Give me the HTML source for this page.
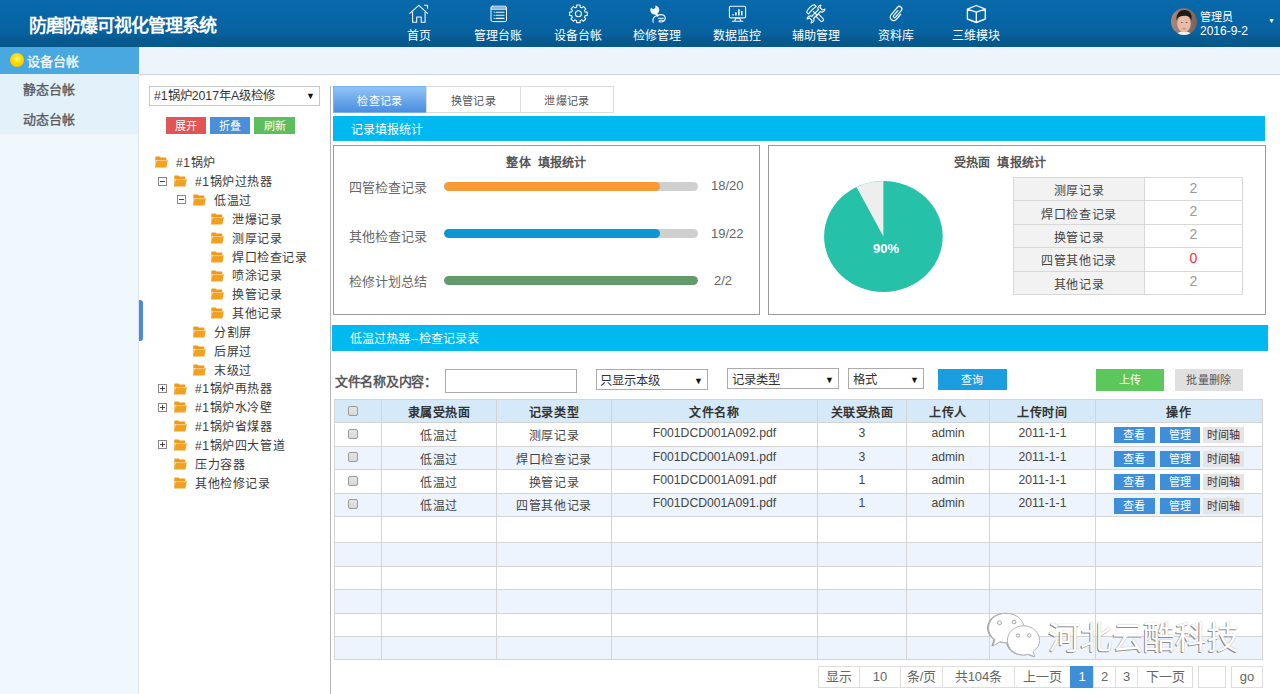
<!DOCTYPE html>
<html lang="zh-CN">
<head>
<meta charset="utf-8">
<style>
*{box-sizing:border-box;margin:0;padding:0}
html,body{width:1280px;height:694px;overflow:hidden;background:#fff;font-family:"Liberation Sans",sans-serif;font-size:12px;color:#333}
.a{position:absolute;white-space:nowrap}
#hdr{position:absolute;left:0;top:0;width:1280px;height:47px;background:linear-gradient(#0869ab 0%,#0765a5 45%,#07619e 72%,#065a90 82%,#06578a 100%)}
#title{position:absolute;left:29px;top:11px;font-size:18px;font-weight:bold;color:#fff;letter-spacing:-1.05px;white-space:nowrap}
.nav{position:absolute;top:0;width:80px;height:47px;text-align:center;color:#fff}
.nav svg{position:absolute;left:30px;top:5px}
.nav span{position:absolute;left:0;right:0;top:28px;font-size:12px;line-height:16px;white-space:nowrap}
#user1{position:absolute;left:1200px;top:11px;color:#fff;font-size:11px;line-height:13px}
#user2{position:absolute;left:1200px;top:24px;color:#fff;font-size:12px;line-height:14px}
#avatar{position:absolute;left:1171px;top:8px;width:26px;height:26px;border-radius:50%;background:radial-gradient(ellipse at 50% 55%,#f2d0bc 0,#e0b09a 32%,#9a7868 52%,#6a5048 100%);overflow:hidden}
#side{position:absolute;left:0;top:47px;width:139px;height:647px;background:#f0f7fd;border-right:1px solid #dde6ee}
#sidehead{position:absolute;left:0;top:47px;width:139px;height:27px;background:#4aa8e0;color:#fff;font-size:13px;font-weight:bold}
.sideitem{position:absolute;left:0;width:138px;height:31px;background:#e3f1fa;border-bottom:1px solid #eef6fb;color:#5a5a5a;font-size:13px;font-weight:normal;-webkit-text-stroke:0.35px #5a5a5a;padding-left:22.5px;line-height:32px}
#topstrip{position:absolute;left:139px;top:47px;width:1141px;height:28px;background:#eef4fb;border-bottom:1px solid #d0d4d8}
.sel{position:absolute;background:#fff;border:1px solid #c8c8c8;font-size:12.3px;color:#333;padding-left:4px;white-space:nowrap;overflow:hidden}
.sel i{position:absolute;right:4px;top:0;font-style:normal;font-size:9px;color:#111}
.btn{position:absolute;color:#fff;font-size:12px;text-align:center;white-space:nowrap}
.tr{position:absolute;font-size:12px;letter-spacing:0.6px;color:#3a3a3a;white-space:nowrap;line-height:16px}
.fold{position:absolute;width:13px;height:12px}
.box{position:absolute;width:9px;height:9px;border:1px solid #888;background:#fff}
.box:before{content:"";position:absolute;left:1px;top:3px;width:5px;height:1px;background:#444}
.box.p:after{content:"";position:absolute;left:3px;top:1px;width:1px;height:5px;background:#444}
.tab{position:absolute;top:86px;height:27px;border:1px solid #dcdcdc;background:#fff;color:#555;font-size:11px;letter-spacing:0.3px;text-align:center;line-height:28px}
.bar{position:absolute;left:333px;width:932px;height:25px;background:#00b9f1;color:#fff;font-size:12px;letter-spacing:0.1px;padding-left:18px;line-height:29px}
.pbox{position:absolute;top:145px;height:170px;border:1px solid #999}
.lbl{position:absolute;font-size:13px;color:#666;white-space:nowrap}
.prog{position:absolute;left:444px;width:254px;height:9px;border-radius:5px;background:#cfcfcf;overflow:hidden}
.prog b{position:absolute;left:0;top:0;height:9px;border-radius:5px}
.val{position:absolute;font-size:13px;color:#666}
table{border-collapse:collapse}
#mini{position:absolute;left:1013px;top:177px;width:230px}
#mini td{border:1px solid #d8d8d8;height:23.4px;font-size:13px;text-align:center;padding:0}
#mini td.l{background:#f2f2f2;color:#444;width:131px;font-size:12px;letter-spacing:0.6px;padding-top:1px}
#mini td.r{color:#9a9a9a;font-size:14px;padding-bottom:3px}
#grid{position:absolute;left:334px;top:399px;width:928px;table-layout:fixed}
#grid td,#grid th{border:1px solid #d4d4d4;text-align:center;padding:0;font-size:12px;letter-spacing:0.6px;color:#444;overflow:hidden;white-space:nowrap}
#grid th{background:#d5e9f8;font-weight:bold;color:#333;font-size:12px;letter-spacing:0.6px;padding-top:1px}
#grid tr.o td{background:#edf4fd}
#grid td.lt{padding-bottom:3px;font-size:12.2px;letter-spacing:0;color:#444}
.cb{position:absolute;left:13px;top:5.5px;width:10px;height:10px;border:1px solid #9a9a9a;border-radius:2px;background:linear-gradient(#e4e4e4,#d8d8d8)}
#grid td:first-child,#grid th:first-child{position:relative}
.ob{position:absolute;height:16.6px;line-height:17px;width:40.5px;font-size:11px;letter-spacing:0.3px;color:#fff;background:#3e8fd8;text-align:center}
.ob.g{background:#e4e4e4;color:#333}
.pg{position:absolute;top:666px;height:22px;border:1px solid #ddd;background:#fff;color:#666;font-size:13px;text-align:center;line-height:20px}
</style>
</head>
<body>
<div id="hdr"></div>
<div id="title">防磨防爆可视化管理系统</div>

<div class="nav" style="left:379px"><span>首页</span></div>
<div class="nav" style="left:458px"><span>管理台账</span></div>
<div class="nav" style="left:538px"><span>设备台帐</span></div>
<div class="nav" style="left:617px"><span>检修管理</span></div>
<div class="nav" style="left:697px"><span>数据监控</span></div>
<div class="nav" style="left:776px"><span>辅助管理</span></div>
<div class="nav" style="left:856px"><span>资料库</span></div>
<div class="nav" style="left:936px"><span>三维模块</span></div>

<svg class="a" style="left:0;top:0" width="1280" height="47" viewBox="0 0 1280 47" fill="none" stroke="#f4f8fc" stroke-width="1.1" stroke-linejoin="round" stroke-linecap="round">
<path d="M409.8 13.3 L418.8 5.3 L427.6 13.3"/>
<path d="M412.6 12.2 V22.3 H416.7 V17 H421.2 V22.3 H425.1 V12.2"/>
<path d="M424.4 5.2 H427.5 V8.2"/>
<rect x="491" y="6.2" width="15.5" height="15.4" rx="1.6" stroke-width="1"/>
<path d="M491.5 8 H506" stroke-width="2.2" stroke-opacity="0.55"/><path d="M491.5 9.4 H506" stroke-width="0.8"/>
<path d="M496 12.2 H504 M496 15.3 H504 M496 18.4 H504"/>
<path d="M494 12.2 H494.6 M494 15.3 H494.6 M494 18.4 H494.6" stroke-width="0.8"/>
<path d="M575.76 7.43 L576.61 7.14 L576.68 4.97 L580.12 4.97 L580.19 7.14 L581.04 7.43 L581.85 7.82 L583.43 6.34 L585.86 8.77 L584.38 10.35 L584.77 11.16 L585.06 12.01 L587.23 12.08 L587.23 15.52 L585.06 15.59 L584.77 16.44 L584.38 17.25 L585.86 18.83 L583.43 21.26 L581.85 19.78 L581.04 20.17 L580.19 20.46 L580.12 22.63 L576.68 22.63 L576.61 20.46 L575.76 20.17 L574.95 19.78 L573.37 21.26 L570.94 18.83 L572.42 17.25 L572.03 16.44 L571.74 15.59 L569.57 15.52 L569.57 12.08 L571.74 12.01 L572.03 11.16 L572.42 10.35 L570.94 8.77 L573.37 6.34 L574.95 7.82 Z"/>
<circle cx="578.4" cy="13.8" r="3"/>
<g transform="rotate(-25 654.8 10)"><circle cx="654.8" cy="10" r="4.5" fill="#f4f8fc" stroke="none"/><circle cx="654.8" cy="6.3" r="2.3" fill="#0868aa" stroke="none"/><rect x="652.5" y="3" width="4.6" height="3.3" fill="#0868aa" stroke="none"/></g><path d="M655.5 13 L657.6 15.6" stroke-width="2.2"/>
<path d="M653.2 22.3 C652.3 19.5 654 16.8 657 15.6 C659.5 14.6 662.5 14.3 664 15.5 C665.8 17 665.6 19.8 663.8 21 C662.5 22 660.5 22.2 659 21.5"/>
<path d="M658.5 18.2 H663.4 M659.3 20.2 H663"/>
<rect x="729.4" y="6.3" width="16.2" height="11.6" rx="1.2"/>
<path d="M732.3 21.2 H742.8 M734.5 21 L736 18.2 H739.5 L741 21" />
<path d="M733.1 15.6 V14.2 M735.9 15.6 V12.3 M738.9 15.6 V9.3 M741.8 15.6 V11" stroke-width="1.6" stroke-linecap="butt"/>
<g transform="rotate(-45 816 14)">
<rect x="814.3" y="15.5" width="3.4" height="8.2" rx="1.2"/>
<path d="M816 10.5 V15.5"/>
<path d="M810.5 6.2 C812.5 4.6 819.5 4.6 821.5 6.2 L821.5 8.8 C819.5 8.2 812.5 8.2 810.5 8.8 Z" transform="rotate(0)"/>
</g>
<g transform="rotate(45 816 14)">
<path d="M814.6 9.4 V18.6 M817.4 9.4 V18.6"/>
<path d="M814.6 9.4 C812.2 8.6 811.8 5.6 813.2 4.2 L814.2 6.6 H817.8 L818.8 4.2 C820.2 5.6 819.8 8.6 817.4 9.4"/>
<path d="M814.6 18.6 C812.2 19.4 811.8 22.4 813.2 23.8 L814.2 21.4 H817.8 L818.8 23.8 C820.2 22.4 819.8 19.4 817.4 18.6"/>
</g>
<path transform="rotate(40 896.5 14)" d="M895.3 10.5 V17 A1.3 1.3 0 0 0 897.9 17 V8.3 A2.5 2.5 0 0 0 892.9 8.3 V18.2 A3.5 3.5 0 0 0 899.9 18.2 V11.5" stroke-width="1.25"/>
<path d="M976.3 5.5 L985.3 9.2 V19 L976.3 22.5 L967.4 19 V9.2 Z M967.4 9.2 L976.3 12.2 L985.3 9.2 M976.3 12.2 V22.5" stroke-width="1.35"/>
</svg>
<svg class="a" style="left:1170px;top:8px" width="28" height="28" viewBox="0 0 28 28"><defs><clipPath id="ac"><ellipse cx="14" cy="13.6" rx="13" ry="13.4"/></clipPath><linearGradient id="abg" x1="0" x2="1"><stop offset="0" stop-color="#b08878"/><stop offset="1" stop-color="#7a6058"/></linearGradient></defs>
<g clip-path="url(#ac)"><rect width="28" height="28" fill="url(#abg)"/>
<path d="M6 30 C6 25 9 23.5 14 23.5 C19 23.5 22 25 22 30 Z" fill="#f2f2f2"/>
<ellipse cx="14" cy="15.5" rx="6.8" ry="8.8" fill="#e6bca6"/>
<path d="M6.5 12.5 C6 5 10 2 14.5 2 C19.5 2 22.5 5.5 21.5 12.5 C20.5 9 18.5 7.5 14 7.8 C9.5 8 7.5 9.5 6.5 12.5 Z" fill="#1e1a1a"/>
<path d="M11 14.5 H12.5 M15.8 14.5 H17.3" stroke="#5a4038" stroke-width="0.8"/>
<path d="M12.5 20.5 Q14 21.3 15.5 20.5" stroke="#b87060" stroke-width="0.9" fill="none"/>
</g></svg>
<div id="user1">管理员</div>
<div id="user2">2016-9-2</div>
<div class="a" style="left:1268px;top:17px;color:#fff;font-size:7px">▼</div>

<div id="side"></div>
<div id="sidehead"><div class="a" style="left:10px;top:6px;width:14px;height:14px;border-radius:50%;background:radial-gradient(circle at 50% 40%,#fff8a0 0,#ffe000 35%,#f8b800 100%)"></div><div class="a" style="left:27px;top:6px;line-height:17px;font-size:13px;font-weight:normal;-webkit-text-stroke:0.35px #f4f8fc;color:#f4f8fc">设备台帐</div></div>
<div class="sideitem" style="top:74px">静态台帐</div>
<div class="sideitem" style="top:104px">动态台帐</div>
<div id="topstrip"></div>

<!-- tree panel -->
<div class="a" style="left:139px;top:300px;width:4px;height:41px;background:#4a8ad8;border-radius:0 3px 3px 0"></div>
<div class="a" style="left:330px;top:86px;width:1.3px;height:608px;background:#b4b4b4"></div>
<div class="sel" style="left:149px;top:86px;width:171px;height:20px;line-height:18px">#1锅炉2017年A级检修<i>▼</i></div>
<div class="btn" style="left:166px;top:117px;width:40px;height:17px;line-height:19px;font-size:11px;background:#e25555">展开</div>
<div class="btn" style="left:210px;top:117px;width:40px;height:17px;line-height:19px;font-size:11px;background:#4a90d8">折叠</div>
<div class="btn" style="left:254px;top:117px;width:41px;height:17px;line-height:19px;font-size:11px;background:#5cbf5c">刷新</div>
<div id="tree"><svg class="fold" style="left:155px;top:156px" width="13" height="12" viewBox="0 0 13 12"><path d="M0.3 1.2 Q0.3 0.4 1 0.4 H4.6 L5.6 1.6 H10.6 Q11.3 1.6 11.3 2.3 V4 H0.3 Z" fill="#ee9a1c"/><path d="M0.2 11.4 L1.6 4.2 H12.8 L11.4 11.4 Z" fill="#f2a01e"/><path d="M0.3 4 V11.3" stroke="#e8961a" stroke-width="0.6"/><path d="M1.8 4.7 H12.3" stroke="#fbd08a" stroke-width="0.7"/></svg><div class="tr" style="left:176px;top:155px">#1锅炉</div><svg class="fold" style="left:174px;top:175px" width="13" height="12" viewBox="0 0 13 12"><path d="M0.3 1.2 Q0.3 0.4 1 0.4 H4.6 L5.6 1.6 H10.6 Q11.3 1.6 11.3 2.3 V4 H0.3 Z" fill="#ee9a1c"/><path d="M0.2 11.4 L1.6 4.2 H12.8 L11.4 11.4 Z" fill="#f2a01e"/><path d="M0.3 4 V11.3" stroke="#e8961a" stroke-width="0.6"/><path d="M1.8 4.7 H12.3" stroke="#fbd08a" stroke-width="0.7"/></svg><div class="box" style="left:158px;top:177px"></div><div class="tr" style="left:195px;top:174px">#1锅炉过热器</div><svg class="fold" style="left:193px;top:194px" width="13" height="12" viewBox="0 0 13 12"><path d="M0.3 1.2 Q0.3 0.4 1 0.4 H4.6 L5.6 1.6 H10.6 Q11.3 1.6 11.3 2.3 V4 H0.3 Z" fill="#ee9a1c"/><path d="M0.2 11.4 L1.6 4.2 H12.8 L11.4 11.4 Z" fill="#f2a01e"/><path d="M0.3 4 V11.3" stroke="#e8961a" stroke-width="0.6"/><path d="M1.8 4.7 H12.3" stroke="#fbd08a" stroke-width="0.7"/></svg><div class="box" style="left:177px;top:195px"></div><div class="tr" style="left:214px;top:193px">低温过</div><svg class="fold" style="left:211px;top:213px" width="13" height="12" viewBox="0 0 13 12"><path d="M0.3 1.2 Q0.3 0.4 1 0.4 H4.6 L5.6 1.6 H10.6 Q11.3 1.6 11.3 2.3 V4 H0.3 Z" fill="#ee9a1c"/><path d="M0.2 11.4 L1.6 4.2 H12.8 L11.4 11.4 Z" fill="#f2a01e"/><path d="M0.3 4 V11.3" stroke="#e8961a" stroke-width="0.6"/><path d="M1.8 4.7 H12.3" stroke="#fbd08a" stroke-width="0.7"/></svg><div class="tr" style="left:232px;top:212px">泄爆记录</div><svg class="fold" style="left:211px;top:232px" width="13" height="12" viewBox="0 0 13 12"><path d="M0.3 1.2 Q0.3 0.4 1 0.4 H4.6 L5.6 1.6 H10.6 Q11.3 1.6 11.3 2.3 V4 H0.3 Z" fill="#ee9a1c"/><path d="M0.2 11.4 L1.6 4.2 H12.8 L11.4 11.4 Z" fill="#f2a01e"/><path d="M0.3 4 V11.3" stroke="#e8961a" stroke-width="0.6"/><path d="M1.8 4.7 H12.3" stroke="#fbd08a" stroke-width="0.7"/></svg><div class="tr" style="left:232px;top:231px">测厚记录</div><svg class="fold" style="left:211px;top:251px" width="13" height="12" viewBox="0 0 13 12"><path d="M0.3 1.2 Q0.3 0.4 1 0.4 H4.6 L5.6 1.6 H10.6 Q11.3 1.6 11.3 2.3 V4 H0.3 Z" fill="#ee9a1c"/><path d="M0.2 11.4 L1.6 4.2 H12.8 L11.4 11.4 Z" fill="#f2a01e"/><path d="M0.3 4 V11.3" stroke="#e8961a" stroke-width="0.6"/><path d="M1.8 4.7 H12.3" stroke="#fbd08a" stroke-width="0.7"/></svg><div class="tr" style="left:232px;top:250px">焊口检查记录</div><svg class="fold" style="left:211px;top:270px" width="13" height="12" viewBox="0 0 13 12"><path d="M0.3 1.2 Q0.3 0.4 1 0.4 H4.6 L5.6 1.6 H10.6 Q11.3 1.6 11.3 2.3 V4 H0.3 Z" fill="#ee9a1c"/><path d="M0.2 11.4 L1.6 4.2 H12.8 L11.4 11.4 Z" fill="#f2a01e"/><path d="M0.3 4 V11.3" stroke="#e8961a" stroke-width="0.6"/><path d="M1.8 4.7 H12.3" stroke="#fbd08a" stroke-width="0.7"/></svg><div class="tr" style="left:232px;top:268px">喷涂记录</div><svg class="fold" style="left:211px;top:288px" width="13" height="12" viewBox="0 0 13 12"><path d="M0.3 1.2 Q0.3 0.4 1 0.4 H4.6 L5.6 1.6 H10.6 Q11.3 1.6 11.3 2.3 V4 H0.3 Z" fill="#ee9a1c"/><path d="M0.2 11.4 L1.6 4.2 H12.8 L11.4 11.4 Z" fill="#f2a01e"/><path d="M0.3 4 V11.3" stroke="#e8961a" stroke-width="0.6"/><path d="M1.8 4.7 H12.3" stroke="#fbd08a" stroke-width="0.7"/></svg><div class="tr" style="left:232px;top:287px">换管记录</div><svg class="fold" style="left:211px;top:307px" width="13" height="12" viewBox="0 0 13 12"><path d="M0.3 1.2 Q0.3 0.4 1 0.4 H4.6 L5.6 1.6 H10.6 Q11.3 1.6 11.3 2.3 V4 H0.3 Z" fill="#ee9a1c"/><path d="M0.2 11.4 L1.6 4.2 H12.8 L11.4 11.4 Z" fill="#f2a01e"/><path d="M0.3 4 V11.3" stroke="#e8961a" stroke-width="0.6"/><path d="M1.8 4.7 H12.3" stroke="#fbd08a" stroke-width="0.7"/></svg><div class="tr" style="left:232px;top:306px">其他记录</div><svg class="fold" style="left:193px;top:326px" width="13" height="12" viewBox="0 0 13 12"><path d="M0.3 1.2 Q0.3 0.4 1 0.4 H4.6 L5.6 1.6 H10.6 Q11.3 1.6 11.3 2.3 V4 H0.3 Z" fill="#ee9a1c"/><path d="M0.2 11.4 L1.6 4.2 H12.8 L11.4 11.4 Z" fill="#f2a01e"/><path d="M0.3 4 V11.3" stroke="#e8961a" stroke-width="0.6"/><path d="M1.8 4.7 H12.3" stroke="#fbd08a" stroke-width="0.7"/></svg><div class="tr" style="left:214px;top:325px">分割屏</div><svg class="fold" style="left:193px;top:345px" width="13" height="12" viewBox="0 0 13 12"><path d="M0.3 1.2 Q0.3 0.4 1 0.4 H4.6 L5.6 1.6 H10.6 Q11.3 1.6 11.3 2.3 V4 H0.3 Z" fill="#ee9a1c"/><path d="M0.2 11.4 L1.6 4.2 H12.8 L11.4 11.4 Z" fill="#f2a01e"/><path d="M0.3 4 V11.3" stroke="#e8961a" stroke-width="0.6"/><path d="M1.8 4.7 H12.3" stroke="#fbd08a" stroke-width="0.7"/></svg><div class="tr" style="left:214px;top:344px">后屏过</div><svg class="fold" style="left:193px;top:364px" width="13" height="12" viewBox="0 0 13 12"><path d="M0.3 1.2 Q0.3 0.4 1 0.4 H4.6 L5.6 1.6 H10.6 Q11.3 1.6 11.3 2.3 V4 H0.3 Z" fill="#ee9a1c"/><path d="M0.2 11.4 L1.6 4.2 H12.8 L11.4 11.4 Z" fill="#f2a01e"/><path d="M0.3 4 V11.3" stroke="#e8961a" stroke-width="0.6"/><path d="M1.8 4.7 H12.3" stroke="#fbd08a" stroke-width="0.7"/></svg><div class="tr" style="left:214px;top:363px">末级过</div><svg class="fold" style="left:174px;top:383px" width="13" height="12" viewBox="0 0 13 12"><path d="M0.3 1.2 Q0.3 0.4 1 0.4 H4.6 L5.6 1.6 H10.6 Q11.3 1.6 11.3 2.3 V4 H0.3 Z" fill="#ee9a1c"/><path d="M0.2 11.4 L1.6 4.2 H12.8 L11.4 11.4 Z" fill="#f2a01e"/><path d="M0.3 4 V11.3" stroke="#e8961a" stroke-width="0.6"/><path d="M1.8 4.7 H12.3" stroke="#fbd08a" stroke-width="0.7"/></svg><div class="box p" style="left:158px;top:384px"></div><div class="tr" style="left:195px;top:381px">#1锅炉再热器</div><svg class="fold" style="left:174px;top:401px" width="13" height="12" viewBox="0 0 13 12"><path d="M0.3 1.2 Q0.3 0.4 1 0.4 H4.6 L5.6 1.6 H10.6 Q11.3 1.6 11.3 2.3 V4 H0.3 Z" fill="#ee9a1c"/><path d="M0.2 11.4 L1.6 4.2 H12.8 L11.4 11.4 Z" fill="#f2a01e"/><path d="M0.3 4 V11.3" stroke="#e8961a" stroke-width="0.6"/><path d="M1.8 4.7 H12.3" stroke="#fbd08a" stroke-width="0.7"/></svg><div class="box p" style="left:158px;top:403px"></div><div class="tr" style="left:195px;top:400px">#1锅炉水冷壁</div><svg class="fold" style="left:174px;top:420px" width="13" height="12" viewBox="0 0 13 12"><path d="M0.3 1.2 Q0.3 0.4 1 0.4 H4.6 L5.6 1.6 H10.6 Q11.3 1.6 11.3 2.3 V4 H0.3 Z" fill="#ee9a1c"/><path d="M0.2 11.4 L1.6 4.2 H12.8 L11.4 11.4 Z" fill="#f2a01e"/><path d="M0.3 4 V11.3" stroke="#e8961a" stroke-width="0.6"/><path d="M1.8 4.7 H12.3" stroke="#fbd08a" stroke-width="0.7"/></svg><div class="tr" style="left:195px;top:419px">#1锅炉省煤器</div><svg class="fold" style="left:174px;top:439px" width="13" height="12" viewBox="0 0 13 12"><path d="M0.3 1.2 Q0.3 0.4 1 0.4 H4.6 L5.6 1.6 H10.6 Q11.3 1.6 11.3 2.3 V4 H0.3 Z" fill="#ee9a1c"/><path d="M0.2 11.4 L1.6 4.2 H12.8 L11.4 11.4 Z" fill="#f2a01e"/><path d="M0.3 4 V11.3" stroke="#e8961a" stroke-width="0.6"/><path d="M1.8 4.7 H12.3" stroke="#fbd08a" stroke-width="0.7"/></svg><div class="box p" style="left:158px;top:440px"></div><div class="tr" style="left:195px;top:438px">#1锅炉四大管道</div><svg class="fold" style="left:174px;top:458px" width="13" height="12" viewBox="0 0 13 12"><path d="M0.3 1.2 Q0.3 0.4 1 0.4 H4.6 L5.6 1.6 H10.6 Q11.3 1.6 11.3 2.3 V4 H0.3 Z" fill="#ee9a1c"/><path d="M0.2 11.4 L1.6 4.2 H12.8 L11.4 11.4 Z" fill="#f2a01e"/><path d="M0.3 4 V11.3" stroke="#e8961a" stroke-width="0.6"/><path d="M1.8 4.7 H12.3" stroke="#fbd08a" stroke-width="0.7"/></svg><div class="tr" style="left:195px;top:457px">压力容器</div><svg class="fold" style="left:174px;top:477px" width="13" height="12" viewBox="0 0 13 12"><path d="M0.3 1.2 Q0.3 0.4 1 0.4 H4.6 L5.6 1.6 H10.6 Q11.3 1.6 11.3 2.3 V4 H0.3 Z" fill="#ee9a1c"/><path d="M0.2 11.4 L1.6 4.2 H12.8 L11.4 11.4 Z" fill="#f2a01e"/><path d="M0.3 4 V11.3" stroke="#e8961a" stroke-width="0.6"/><path d="M1.8 4.7 H12.3" stroke="#fbd08a" stroke-width="0.7"/></svg><div class="tr" style="left:195px;top:476px">其他检修记录</div></div><!--/tree-->

<!-- tabs -->
<div class="tab" style="left:333px;width:94px;background:linear-gradient(#90c4f8,#4a8ede);border-color:#7ab0ee;color:#fff">检查记录</div>
<div class="tab" style="left:426px;width:95px">换管记录</div>
<div class="tab" style="left:520px;width:94px">泄爆记录</div>

<div class="bar" style="top:116px">记录填报统计</div>

<div class="pbox" style="left:333px;width:427px"></div>
<div class="pbox" style="left:768px;width:498px"></div>
<div class="a" style="left:333px;width:427px;top:153px;text-align:center;font-size:12px;font-weight:bold;color:#555;letter-spacing:0.2px">整体&nbsp; 填报统计</div>
<div class="lbl" style="left:349px;top:177px">四管检查记录</div>
<div class="lbl" style="left:349px;top:226px">其他检查记录</div>
<div class="lbl" style="left:349px;top:271px">检修计划总结</div>
<div class="prog" style="top:181.5px"><b style="width:216px;background:#fa9a36"></b></div>
<div class="prog" style="top:229px"><b style="width:216px;background:#0e96d0"></b></div>
<div class="prog" style="top:276px"><b style="width:254px;background:#639a6c"></b></div>
<div class="val" style="left:711px;top:178px">18/20</div>
<div class="val" style="left:711px;top:226px">19/22</div>
<div class="val" style="left:714px;top:273px">2/2</div>

<div class="a" style="left:768px;width:464px;top:153px;text-align:center;font-size:12px;font-weight:bold;color:#555;letter-spacing:0.2px">受热面&nbsp; 填报统计</div>
<svg class="a" style="left:820px;top:177px" width="128" height="120" viewBox="820 177 128 120">
<ellipse cx="883.4" cy="236.5" rx="59.3" ry="55.5" fill="#26c1a9"/>
<path d="M883.4 236.5 L883.4 181 A59.3 55.5 0 0 0 856.5 187.1 Z" fill="#eeeeee"/>
</svg>
<div class="a" style="left:873px;top:241px;font-size:13px;font-weight:bold;color:#fff">90%</div>
<table id="mini">
<tr><td class="l">测厚记录</td><td class="r">2</td></tr>
<tr><td class="l">焊口检查记录</td><td class="r">2</td></tr>
<tr><td class="l">换管记录</td><td class="r">2</td></tr>
<tr><td class="l">四管其他记录</td><td class="r" style="color:#f03040">0</td></tr>
<tr><td class="l">其他记录</td><td class="r">2</td></tr>
</table>

<div class="bar" style="top:325px;left:332px;width:935.5px;height:26px;line-height:29.5px">低温过热器--检查记录表</div>

<div class="a" style="left:335px;top:371px;font-size:13px;font-weight:bold;color:#5a5a5a;letter-spacing:-0.3px">文件名称及内容：</div>
<div class="a" style="left:445px;top:369px;width:132px;height:24px;border:1px solid #aaa;background:#fff"></div>
<div class="sel" style="left:596px;top:369px;width:112px;height:21px;line-height:22px;border-color:#aaa;padding-left:3px">只显示本级<i>▼</i></div>
<div class="sel" style="left:727px;top:368px;width:112px;height:21px;line-height:22px;border-color:#aaa">记录类型<i>▼</i></div>
<div class="sel" style="left:848px;top:368px;width:76px;height:21px;line-height:22px;border-color:#aaa">格式<i>▼</i></div>
<div class="btn" style="left:938px;top:369px;width:69px;height:21px;line-height:22px;font-size:11px;letter-spacing:0.3px;background:#1a9ee0">查询</div>
<div class="btn" style="left:1096px;top:369px;width:68px;height:22px;line-height:23px;font-size:11px;letter-spacing:0.3px;background:#5cc85c">上传</div>
<div class="btn" style="left:1175px;top:369px;width:68px;height:22px;line-height:23px;font-size:11px;letter-spacing:0.3px;background:#e0e0e0;color:#555">批量删除</div>

<table id="grid">
<colgroup><col style="width:47px"><col style="width:115px"><col style="width:115px"><col style="width:206px"><col style="width:89px"><col style="width:83px"><col style="width:106px"><col style="width:167px"></colgroup>
<tr style="height:23.1px"><th><span class="cb"></span></th><th>隶属受热面</th><th>记录类型</th><th>文件名称</th><th>关联受热面</th><th>上传人</th><th>上传时间</th><th>操作</th></tr>
<tr style="height:23.9px"><td><span class="cb"></span></td><td>低温过</td><td>测厚记录</td><td class="lt">F001DCD001A092.pdf</td><td class="lt">3</td><td class="lt">admin</td><td class="lt">2011-1-1</td><td></td></tr>
<tr class="o" style="height:23.3px"><td><span class="cb"></span></td><td>低温过</td><td>焊口检查记录</td><td class="lt">F001DCD001A091.pdf</td><td class="lt">3</td><td class="lt">admin</td><td class="lt">2011-1-1</td><td></td></tr>
<tr style="height:23.6px"><td><span class="cb"></span></td><td>低温过</td><td>换管记录</td><td class="lt">F001DCD001A091.pdf</td><td class="lt">1</td><td class="lt">admin</td><td class="lt">2011-1-1</td><td></td></tr>
<tr class="o" style="height:22.8px"><td><span class="cb"></span></td><td>低温过</td><td>四管其他记录</td><td class="lt">F001DCD001A091.pdf</td><td class="lt">1</td><td class="lt">admin</td><td class="lt">2011-1-1</td><td></td></tr>
<tr style="height:26.3px"><td></td><td></td><td></td><td></td><td></td><td></td><td></td><td></td></tr>
<tr class="o" style="height:24.0px"><td></td><td></td><td></td><td></td><td></td><td></td><td></td><td></td></tr>
<tr style="height:23.4px"><td></td><td></td><td></td><td></td><td></td><td></td><td></td><td></td></tr>
<tr class="o" style="height:23.7px"><td></td><td></td><td></td><td></td><td></td><td></td><td></td><td></td></tr>
<tr style="height:23.0px"><td></td><td></td><td></td><td></td><td></td><td></td><td></td><td></td></tr>
<tr class="o" style="height:22.8px"><td></td><td></td><td></td><td></td><td></td><td></td><td></td><td></td></tr>
</table>
<div class="ob" style="left:1114px;top:426.7px">查看</div><div class="ob" style="left:1159.7px;top:426.7px">管理</div><div class="ob g" style="left:1203.4px;top:426.7px">时间轴</div>
<div class="ob" style="left:1114px;top:450.6px">查看</div><div class="ob" style="left:1159.7px;top:450.6px">管理</div><div class="ob g" style="left:1203.4px;top:450.6px">时间轴</div>
<div class="ob" style="left:1114px;top:473.9px">查看</div><div class="ob" style="left:1159.7px;top:473.9px">管理</div><div class="ob g" style="left:1203.4px;top:473.9px">时间轴</div>
<div class="ob" style="left:1114px;top:497.5px">查看</div><div class="ob" style="left:1159.7px;top:497.5px">管理</div><div class="ob g" style="left:1203.4px;top:497.5px">时间轴</div>

<div class="pg" style="left:818px;width:42px">显示</div>
<div class="pg" style="left:859px;width:42px">10</div>
<div class="pg" style="left:900px;width:43px">条/页</div>
<div class="pg" style="left:942px;width:73px">共104条</div>
<div class="pg" style="left:1014px;width:57px">上一页</div>
<div class="pg" style="left:1070px;width:24px;background:#3f8ed8;border-color:#3f8ed8;color:#fff">1</div>
<div class="pg" style="left:1093px;width:23px">2</div>
<div class="pg" style="left:1115px;width:23px">3</div>
<div class="pg" style="left:1137px;width:56px">下一页</div>
<div class="pg" style="left:1198px;width:28px"></div>
<div class="pg" style="left:1231px;width:32px">go</div>

<svg class="a" style="left:984px;top:608px;filter:drop-shadow(-0.8px 0.8px 0 #a0a0a0)" width="60" height="52" viewBox="984 608 60 52">
<g fill="#fff" stroke="#b4b4b4" stroke-width="1">
<path d="M1006 613.3 C996 613.3 988.6 619.8 988.6 628 C988.6 632.8 991 636.8 995 639.5 L993 646 L1000 641.8 C1002 642.4 1004 642.7 1006 642.7 C1016 642.7 1024 636.2 1024 628 C1024 619.8 1016 613.3 1006 613.3 Z"/>
<path d="M1023.5 625.8 C1014.5 625.8 1007.4 632.4 1007.4 640.5 C1007.4 648.6 1014.5 655 1023.5 655 C1025.2 655 1026.8 654.8 1028.3 654.3 L1034.8 656.6 L1033.2 651.2 C1037.2 648.6 1039.6 644.8 1039.6 640.5 C1039.6 632.4 1032.5 625.8 1023.5 625.8 Z"/>
</g>
<g fill="#fff" stroke="#9a9a9a" stroke-width="0.9">
<circle cx="999.5" cy="622.8" r="1.9"/><circle cx="1014" cy="622" r="1.9"/>
<circle cx="1018" cy="635.5" r="1.7"/><circle cx="1029.2" cy="635.5" r="1.7"/>
</g>
</svg>
<div class="a" style="left:1048px;top:616.5px;font-size:32px;font-weight:300;line-height:42px;color:#fff;letter-spacing:-0.2px;text-shadow:-1px 1px 0 #8a8a8a,0 0 1px #9a9a9a">河北云酷科技</div>
</body>
</html>
